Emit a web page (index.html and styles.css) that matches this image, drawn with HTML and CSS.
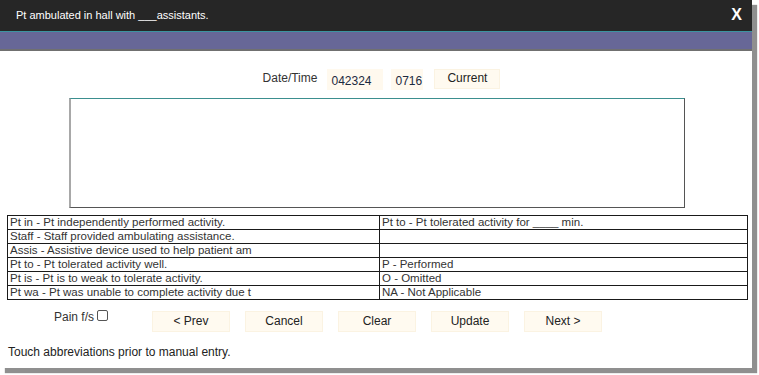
FILE: index.html
```html
<!DOCTYPE html>
<html>
<head>
<meta charset="utf-8">
<link rel="stylesheet" href="styles.css">
</head>
<body>
<div class="dialog">
  <div class="titlebar">
    <span class="title">Pt ambulated in hall with ___assistants.</span>
    <span class="close">X</span>
  </div>
  <div class="band"></div>
  <div class="content">
    <div class="datetime">
      <span class="dt-label">Date/Time</span>
      <span class="field date">042324</span>
      <span class="field time">0716</span>
      <span class="btn current">Current</span>
    </div>
    <div class="notes"></div>
    <table class="abbr">
      <tr><td>Pt in - Pt independently performed activity.</td><td>Pt to - Pt tolerated activity for ____ min.</td></tr>
      <tr><td>Staff - Staff provided ambulating assistance.</td><td></td></tr>
      <tr><td>Assis - Assistive device used to help patient am</td><td></td></tr>
      <tr><td>Pt to - Pt tolerated activity well.</td><td>P - Performed</td></tr>
      <tr><td>Pt is - Pt is to weak to tolerate activity.</td><td>O - Omitted</td></tr>
      <tr><td>Pt wa - Pt was unable to complete activity due t</td><td>NA - Not Applicable</td></tr>
    </table>
    <div class="actions">
      <label class="pain">Pain f/s <span class="check"></span></label>
      <div class="buttons">
        <span class="btn">&lt; Prev</span>
        <span class="btn">Cancel</span>
        <span class="btn">Clear</span>
        <span class="btn">Update</span>
        <span class="btn">Next &gt;</span>
      </div>
    </div>
    <p class="hint">Touch abbreviations prior to manual entry.</p>
  </div>
</div>
</body>
</html>
```
FILE: styles.css
```css
html, body {
  margin: 0;
  padding: 0;
  background: #ffffff;
}
body {
  font-family: "Liberation Sans", Arial, sans-serif;
  font-size: 12px;
  color: #222;
  min-height: 375px;
}
.dialog {
  width: 752px;
  height: 368px;
  background: #fff;
  box-shadow: 5px 5px 1px #8f8f8f;
  display: flex;
  flex-direction: column;
}
.titlebar {
  height: 32px;
  box-sizing: border-box;
  background: #262626;
  border-bottom: 1px solid #3b94a0;
  display: flex;
  align-items: center;
  justify-content: space-between;
  padding: 0 10px 2px 16px;
  color: #fff;
}
.title {
  font-size: 11px;
}
.close {
  font-size: 16px;
  font-weight: bold;
  color: #fff;
}
.band {
  height: 17px;
  background: #676797;
  border-bottom: 2px solid #707070;
}
.content {
  padding: 0 4px 0 7px;
}
.datetime {
  display: flex;
  align-items: center;
  justify-content: center;
  margin-top: 18px;
  margin-left: 8px;
  height: 21px;
}
.dt-label {
  color: #333;
  margin-right: 10px;
  margin-top: -4px;
}
.field {
  background: #fff9ee;
  color: #1c2a40;
  height: 21px;
  line-height: 24px;
  padding: 0 4px;
  box-sizing: border-box;
}
.date {
  width: 56px;
  margin-right: 8px;
}
.time {
  width: 32px;
  margin-right: 11px;
}
.btn {
  background: #fffaf0;
  border: 1px solid #fbf3e2;
  color: #222;
  text-align: center;
  box-sizing: border-box;
}
.current {
  width: 66px;
  height: 20px;
  line-height: 17px;
  margin-top: -1px;
}
.notes {
  width: 616px;
  height: 110px;
  box-sizing: border-box;
  margin: 8px 0 0 62px;
  border-top: 1px solid #3b8f8f;
  border-left: 2px solid #a8a8a8;
  border-right: 1px solid #555;
  border-bottom: 1px solid #555;
}
.abbr {
  width: 741px;
  margin-top: 7px;
  border-collapse: collapse;
  border: 1px solid #4a4a4a;
  border-top-color: #5a5a90;
  table-layout: fixed;
}
.abbr td {
  width: 50%;
  height: 13px;
  padding: 0 0 0 2px;
  border: 1px solid #1a1a1a;
  font-size: 11.5px;
  line-height: 13px;
  color: #333;
  white-space: nowrap;
  overflow: hidden;
}
.abbr td:first-child {
  width: 369px;
}
.actions {
  display: flex;
  align-items: flex-start;
  margin-top: 11px;
}
.pain {
  margin-left: 47px;
  color: #333;
  display: flex;
  align-items: center;
  gap: 3px;
  margin-top: -1px;
}
.check {
  display: inline-block;
  width: 9px;
  height: 9px;
  border: 1px solid #555;
  border-radius: 2px;
  margin-top: -3px;
}
.buttons {
  display: flex;
  gap: 15px;
  margin-left: 44px;
}
.buttons .btn {
  width: 78px;
  height: 21px;
  line-height: 19px;
}
.hint {
  margin: 13px 0 0 1px;
  color: #222;
}
```
